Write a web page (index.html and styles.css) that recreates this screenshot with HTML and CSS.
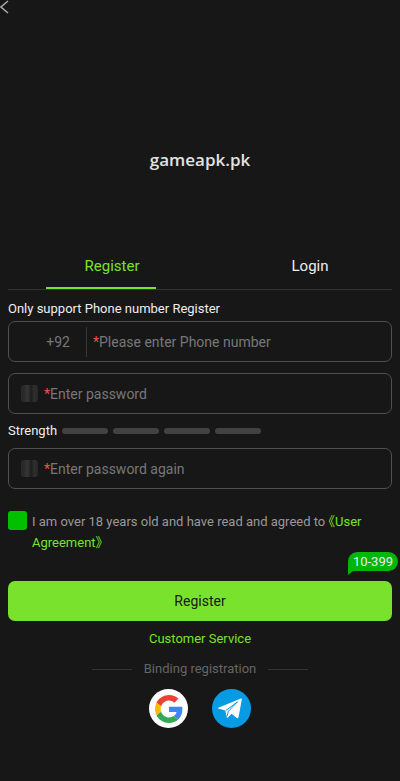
FILE: index.html
```html
<!DOCTYPE html>
<html lang="en">
<head>
<meta charset="utf-8">
<meta name="viewport" content="width=device-width, initial-scale=1">
<title>Register</title>
<link rel="stylesheet" href="styles.css">
</head>
<body>
<header class="topbar">
  <a class="back" href="#" aria-label="Back"><svg width="9" height="14" viewBox="0 0 9 14"><path d="M8 1 1 7l7 6" fill="none" stroke="currentColor" stroke-width="1.5"/></svg></a>
</header>
<main class="page">
  <h1 class="brand">gameapk.pk</h1>
  <nav class="tabs">
    <button class="tab active" type="button">Register</button>
    <button class="tab" type="button">Login</button>
  </nav>
  <form class="form">
    <label class="caption" for="phone">Only support Phone number Register</label>
    <div class="field">
      <span class="code">+92</span>
      <label class="star" for="phone">*</label>
      <input id="phone" type="tel" placeholder="Please enter Phone number">
    </div>
    <div class="field second">
      <span class="lock"></span>
      <label class="star" for="password">*</label>
      <input id="password" type="password" placeholder="Enter password">
    </div>
    <div class="strength">
      <span class="strength-label">Strength</span>
      <i class="bar"></i><i class="bar"></i><i class="bar"></i><i class="bar"></i>
    </div>
    <div class="field">
      <span class="lock"></span>
      <label class="star" for="again">*</label>
      <input id="again" type="password" placeholder="Enter password again">
    </div>
    <div class="terms">
      <input class="check" id="agree" type="checkbox" checked>
      <p class="terms-text"><label for="agree">I am over 18 years old and have read and agreed to</label> <a href="#">《User Agreement》</a></p>
    </div>
    <div class="action">
      <span class="badge">10-399</span>
      <button class="submit" type="submit">Register</button>
    </div>
  </form>
  <a class="service" href="#">Customer Service</a>
  <div class="divider">Binding registration</div>
  <div class="social">
    <a class="google" href="#" aria-label="Google"><svg width="28" height="28" viewBox="0 0 48 48"><path fill="#ea4335" d="M24 9.5c3.54 0 6.71 1.22 9.21 3.6l6.85-6.85C35.9 2.38 30.47 0 24 0 14.62 0 6.51 5.38 2.56 13.22l7.98 6.19C12.43 13.72 17.74 9.5 24 9.5z"/><path fill="#4285f4" d="M46.98 24.55c0-1.57-.15-3.09-.38-4.55H24v9.02h12.94c-.58 2.96-2.26 5.48-4.78 7.18l7.73 6c4.51-4.18 7.09-10.36 7.09-17.65z"/><path fill="#fbbc05" d="M10.53 28.59A14.5 14.5 0 0 1 9.77 24c0-1.6.27-3.14.76-4.59l-7.98-6.19A24 24 0 0 0 0 24c0 3.88.92 7.54 2.56 10.78z"/><path fill="#34a853" d="M24 48c6.48 0 11.93-2.13 15.89-5.81l-7.73-6c-2.15 1.45-4.92 2.3-8.16 2.3-6.26 0-11.57-4.22-13.47-9.91l-7.98 6.19C6.51 42.62 14.62 48 24 48z"/></svg></a>
    <a class="telegram" href="#" aria-label="Telegram"><svg width="39" height="39" viewBox="0 0 39 39"><path fill="#fff" d="M6.200 18.700 29 9.500Q30 9.300 29.800 10.400L26.500 28.300Q26.100 29.700 24.800 29L19.600 24.800 15.800 28.600Q14.800 29.200 14.700 27.800L13.300 21.400 6.300 19.500Q5.400 19.100 6.200 18.700Z"/><path d="M13.800 21.500 25.500 12.900 16.300 22.300 15.100 27.200" fill="none" stroke="#109ce5"/></svg></a>
  </div>
</main>
</body>
</html>
```
FILE: styles.css
```css
* { box-sizing: border-box; }
body {
  margin: 0;
  min-height: 100vh;
  background: #171717;
  color: #eee;
  font: 13px/20px Roboto, "Noto Sans CJK SC", sans-serif;
}
button, input { font: inherit; }
a { color: #79e22c; text-decoration: none; }
.topbar { height: 20px; }
.back { display: inline-block; color: #aaa; }
.back svg { display: block; }
.page { padding: 0 8px 52px; }
.brand {
  margin: 128px 0 0;
  text-align: center;
  color: #e2e2e2;
  font: 600 17px/24px "Open Sans", sans-serif;
}
.tabs {
  display: flex;
  justify-content: space-between;
  margin-top: 72px;
  padding: 0 38px;
  border-bottom: 1px solid #343434;
}
.tab {
  width: 110px;
  height: 45px;
  padding: 0 0 0 22px;
  border: 0;
  border-bottom: 2px solid transparent;
  background: none;
  color: #eee;
  font-size: 15px;
}
.tab.active { color: #79e22c; border-color: #79e22c; }
.caption { display: block; margin: 9px 0 2px; }
.field {
  display: flex;
  align-items: center;
  height: 41px;
  border: 1px solid #505050;
  border-radius: 7px;
  color: #777;
  font-size: 14px;
}
.field.second { margin-top: 11px; }
.field input {
  flex: 1;
  min-width: 0;
  padding: 0;
  border: 0;
  outline: 0;
  background: none;
  color: #eee;
}
.field input::placeholder { color: #777; opacity: 1; }
.star { color: #ee5340; }
.code {
  width: 78px;
  margin-right: 6px;
  padding-right: 16px;
  border-right: 1px solid #383838;
  line-height: 30px;
  text-align: right;
}
.lock {
  width: 17px;
  height: 17px;
  margin: 0 6px 0 12px;
  border-radius: 3px;
  background: linear-gradient(90deg, #292929 0 3px, #363636 6px, #282828 9px, #1b1b1b 10px, #2f2f2f 13px, #282828);
}
.strength { display: flex; align-items: center; height: 34px; gap: 5px; }
.bar { width: 46px; height: 6px; border-radius: 3px; background: #424242; }
.terms { display: flex; gap: 5px; margin-top: 22px; color: #999; }
.check {
  appearance: none;
  flex: none;
  width: 19px;
  height: 19px;
  margin: 0;
  border-radius: 3px;
  background: #00c000;
}
.terms-text { margin: 0; line-height: 21px; font-feature-settings: "halt"; }
.action { position: relative; margin-top: 28px; }
.badge {
  position: absolute;
  right: -6px;
  bottom: 50px;
  padding: 0 5px;
  border-radius: 10px 10px 10px 0;
  background: #00b60b;
  color: #eee;
  line-height: 19px;
}
.badge::after {
  content: "";
  position: absolute;
  left: 0;
  top: 100%;
  border-top: 4px solid #00b60b;
  border-right: 5px solid transparent;
}
.submit {
  display: block;
  width: 100%;
  height: 40px;
  padding: 0;
  border: 0;
  border-radius: 7px;
  background: #79e22c;
  color: #171717;
  font-size: 14px;
}
.service { display: block; width: fit-content; margin: 8px auto 10px; }
.divider {
  display: flex;
  justify-content: center;
  align-items: center;
  gap: 12px;
  color: #666;
}
.divider::before, .divider::after { content: ""; width: 40px; height: 1px; background: #333; }
.social { display: flex; justify-content: center; gap: 24px; margin-top: 10px; }
.social a {
  display: flex;
  align-items: center;
  justify-content: center;
  width: 39px;
  height: 39px;
  border-radius: 50%;
}
.google { background: #fff; }
.telegram { background: #079be4; }
```
